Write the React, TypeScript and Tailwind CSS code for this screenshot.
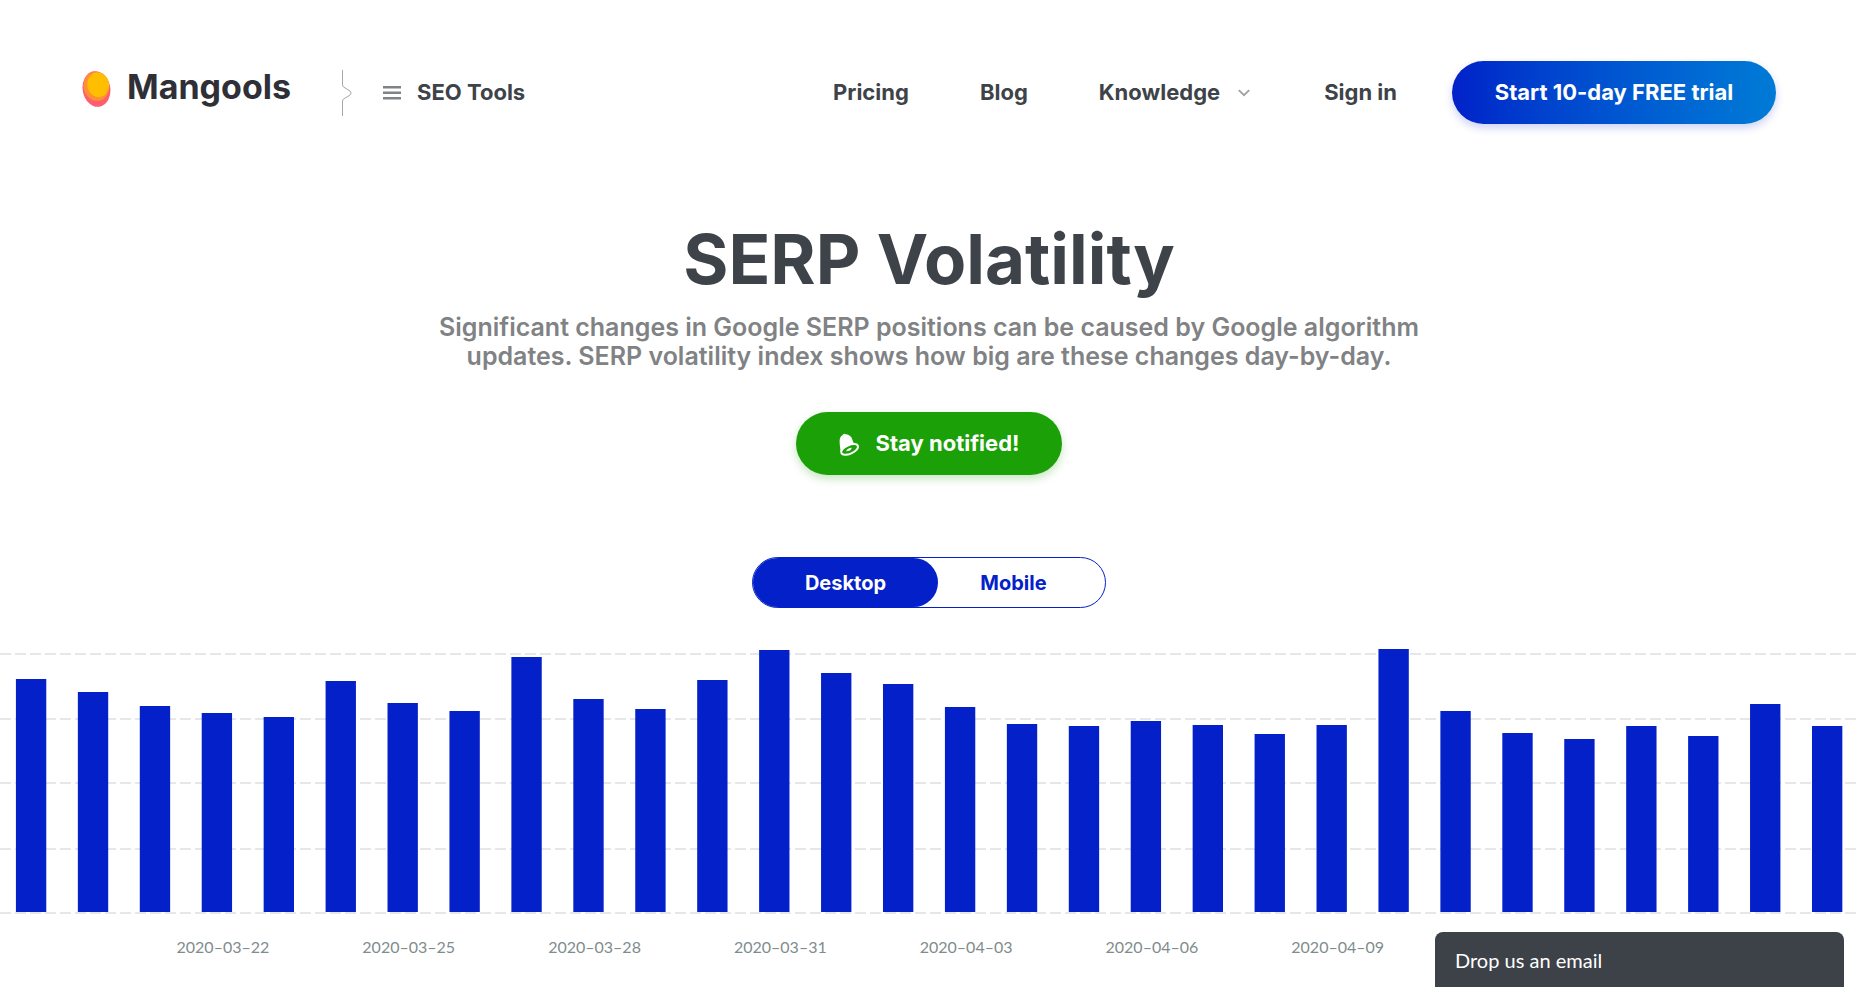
const values = [
  233, 220, 206, 199, 195, 231, 209, 201, 255, 213, 203, 232, 262, 239, 228, 205, 188, 186, 191, 187,
  178, 187, 263, 201, 179, 173, 186, 176, 208, 186,
];
const dates = ['2020–03–22', '2020–03–25', '2020–03–28', '2020–03–31', '2020–04–03', '2020–04–06', '2020–04–09'];
const gridLines = [6, 71, 135, 201, 265];
const BASELINE = 264;

function Logo() {
  return (
    <a href="#" className="flex items-center gap-4 text-[#2f2f37]">
      <svg width="29" height="40" viewBox="0 -4 29 40" aria-hidden="true">
        <ellipse cx="14.5" cy="18" rx="13.8" ry="17.9" fill="#ff5f6d" transform="rotate(-10 14.5 18)" />
        <ellipse cx="14.4" cy="15.3" rx="12.8" ry="14.7" fill="#ff8f35" transform="rotate(-10 14.4 15.3)" />
        <ellipse cx="16.2" cy="13.8" rx="10.8" ry="12.4" fill="#ffbf00" transform="rotate(-10 16.2 13.8)" />
      </svg>
      <span className="text-[34px] leading-9 font-bold">Mangools</span>
    </a>
  );
}

function Bell() {
  return (
    <svg width="21" height="24" viewBox="0 0 21 24" fill="none" aria-hidden="true">
      <path
        d="M1.500 20 C1.500 14 -1.500 6 3.500 3.300 Q4.500 0.800 7 2.300 C13.500 3.500 13 8 14.500 10.500 Q16 12.300 19.500 13.500 L12 19Z"
        fill="#fff"
      />
      <ellipse cx="10.600" cy="17.400" rx="9" ry="4.300" transform="rotate(-24 10.600 17.400)" fill="#1ca008" stroke="#fff" strokeWidth="2" />
      <path d="M7 19.300 Q8.500 16 12.800 15.800 Q12 19.300 7 19.300Z" fill="#fff" />
    </svg>
  );
}

function Header() {
  return (
    <header className="flex h-[185px] items-center justify-between px-[82px] text-[22px] font-bold">
      <div className="flex items-center">
        <div className="pb-3">
          <Logo />
        </div>
        <svg className="ml-[50px]" width="12" height="46" viewBox="0 0 12 46" fill="none" stroke="#a5a7a9" aria-hidden="true">
          <path d="M1.500 0V15 Q1.500 17 5 18.500 L9 21 Q11.500 23 9 25 L5 27.500 Q1.500 29 1.500 31 V46" />
        </svg>
        <button type="button" className="ml-[30px] flex items-center gap-4">
          <svg width="18" height="14" viewBox="0 0 18 14" fill="#808386" aria-hidden="true">
            <path d="M0 0h18v2.500H0zM0 5.500h18v2.500H0zM0 11h18v2.500H0z" />
          </svg>
          SEO Tools
        </button>
      </div>
      <nav className="flex items-center">
        <a href="#" className="mr-[71px]">Pricing</a>
        <a href="#" className="mr-[71px]">Blog</a>
        <button type="button" className="mr-[74px] flex items-center gap-[18px]">
          Knowledge
          <svg width="12" height="8" viewBox="0 0 11 7" fill="none" stroke="#a0a3a5" strokeWidth="1.700" aria-hidden="true">
            <path d="M0.700 0.800 5.500 5.500 10.300 0.800" />
          </svg>
        </button>
        <a href="#" className="mr-[55px]">Sign in</a>
        <a
          href="#"
          className="flex h-[63px] w-[324px] items-center justify-center rounded-full bg-linear-to-r from-[#0420c9] to-[#007bd6] text-white shadow-[0_4px_8px_rgba(4,32,201,0.2)]"
        >
          Start 10-day FREE trial
        </a>
      </nav>
    </header>
  );
}

function Chart() {
  const pitch = 100 / values.length;
  return (
    <section className="mt-10">
      <svg className="block h-[268px] w-full" role="img" aria-label="SERP volatility by day">
        {gridLines.map((y) => (
          <line key={y} x1="0" x2="100%" y1={y} y2={y} stroke="#dedfe1" strokeWidth="1.500" strokeDasharray="11 4" />
        ))}
        {values.map((v, i) => (
          <rect key={i} x={`${(i + 0.257) * pitch}%`} y={BASELINE - v} width={`${pitch * 0.49}%`} height={v} fill="#0420c9" />
        ))}
      </svg>
      <div className="ml-[7%] grid w-[70%] grid-cols-7 pt-[19px] text-center font-[Lato] text-base text-[#7f8c8d]">
        {dates.map((d) => (
          <span key={d}>{d}</span>
        ))}
      </div>
    </section>
  );
}

export default function App() {
  return (
    <div className="min-h-screen bg-white font-[Inter,sans-serif] text-[#3d4348]">
      <Header />
      <main>
        <div className="flex flex-col items-center pt-[37px] text-center">
          <h1 className="text-[69px] leading-[74px] font-bold">SERP Volatility</h1>
          <p className="mt-[17px] max-w-[1000px] text-[25px] leading-[29px] font-semibold text-[#808284]">
            Significant changes in Google SERP positions can be caused by Google algorithm updates. SERP volatility
            index shows how big are these changes day-by-day.
          </p>
          <button
            type="button"
            className="mt-[41px] flex h-[63px] w-[266px] items-center justify-center gap-4 rounded-full bg-[#1ca008] text-[22px] font-bold text-white shadow-[0_4px_8px_rgba(28,160,8,0.25)]"
          >
            <Bell />
            Stay notified!
          </button>
          <div className="mt-[82px] flex h-[51px] w-[354px] rounded-full border border-[#0420c9] text-xl font-bold">
            <button type="button" className="h-full w-[185px] rounded-full bg-[#0420c9] text-white">
              Desktop
            </button>
            <button type="button" className="h-full flex-1 pr-4 text-[#0420c9]">
              Mobile
            </button>
          </div>
        </div>
        <Chart />
      </main>
      <button
        type="button"
        className="fixed right-[14px] bottom-0 h-[55px] w-[409px] rounded-t-lg bg-[#3d4148] px-5 text-left font-[Lato] text-xl text-white"
      >
        Drop us an email
      </button>
    </div>
  );
}
